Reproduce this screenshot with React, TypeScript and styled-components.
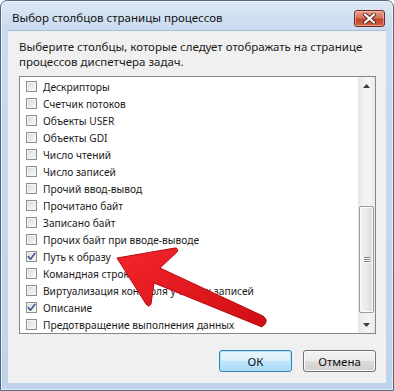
import React from "react";
import styled, { createGlobalStyle } from "styled-components";

const Global = createGlobalStyle`
  html, body { margin: 0; padding: 0; background: #ffffff; }
  body {
    width: 394px;
    height: 391px;
    overflow: hidden;
    font-family: "Noto Sans", "Open Sans", "DejaVu Sans", sans-serif;
    font-size: 11.5px;
    color: #1a1a1a;
  }
`;

const Window = styled.div`
  position: relative;
  box-sizing: border-box;
  width: 394px;
  height: 391px;
  border: 1px solid #56687d;
  border-radius: 7px 7px 0 0;
  background: linear-gradient(180deg, #dbe7f4 0px, #c9dbef 30px, #bfd4ec 100%);
  box-shadow: inset 0 0 0 1px rgba(255, 255, 255, 0.55);
  display: flex;
  flex-direction: column;
  padding: 0 7px 7px 7px;
`;

const TitleBar = styled.div`
  height: 29px;
  display: flex;
  align-items: center;
  justify-content: space-between;
  padding: 0 1px 0 4px;
`;

const Title = styled.div`
  font-size: 11.5px;
  color: #111;
  padding-top: 3px;
`;

const CloseButton = styled.div`
  box-sizing: border-box;
  width: 31px;
  height: 17px;
  margin-top: 5px;
  border: 1px solid #6e2a22;
  border-radius: 3px;
  background: linear-gradient(180deg, #e8a08c 0%, #d5735c 45%, #c2442c 55%, #cf6245 100%);
  box-shadow: inset 0 0 0 1px rgba(255, 210, 200, 0.5);
  display: flex;
  align-items: center;
  justify-content: center;
`;

const Client = styled.div`
  flex: 1;
  background: #f0f0f0;
  border-top: 1px solid #a8bdd6;
  display: flex;
  flex-direction: column;
  padding: 8px 10px 0 11px;
`;

const Description = styled.div`
  line-height: 15px;
  color: #1a1a1a;
`;

const ListBox = styled.div`
  margin-top: 7px;
  height: 258px;
  box-sizing: border-box;
  border: 1px solid #828790;
  background: #ffffff;
  display: flex;
`;

const Items = styled.div`
  flex: 1;
  padding-top: 1px;
  display: flex;
  flex-direction: column;
  font-size: 10.2px;
`;

const Row = styled.div`
  height: 17px;
  display: flex;
  align-items: center;
  padding-left: 6px;
  gap: 6px;
  white-space: nowrap;
`;

const Box = styled.div`
  box-sizing: border-box;
  width: 11px;
  height: 11px;
  flex: none;
  border: 1px solid #8e8f8f;
  background: linear-gradient(135deg, #d7d7d7 0%, #ececec 55%, #fbfbfb 100%);
  box-shadow: inset 0 0 0 1px #f4f4f4;
  display: flex;
  align-items: center;
  justify-content: center;
`;

const Scrollbar = styled.div`
  width: 17px;
  flex: none;
  display: flex;
  flex-direction: column;
  background: linear-gradient(90deg, #e6e6e6 0%, #f1f1f1 30%, #f4f4f4 70%, #eaeaea 100%);
`;

const ArrowButton = styled.div`
  height: 17px;
  flex: none;
  display: flex;
  align-items: center;
  justify-content: center;
`;

const Track = styled.div`
  flex: 1;
  display: flex;
  flex-direction: column;
`;

const Thumb = styled.div`
  box-sizing: border-box;
  margin: 0 1px;
  border: 1px solid #9b9b9b;
  border-radius: 2px;
  background: linear-gradient(90deg, #f2f2f2 0%, #eaeaea 50%, #dadada 100%);
  box-shadow: inset 0 0 0 1px #fbfbfb;
  display: flex;
  flex-direction: column;
  align-items: center;
  justify-content: center;
  gap: 1px;
`;

const Grip = styled.div`
  width: 6px;
  height: 1px;
  background: #7f7f7f;
  box-shadow: 0 1px 0 #fdfdfd;
`;

const Buttons = styled.div`
  margin-top: 16px;
  display: flex;
  justify-content: flex-end;
  gap: 11px;
`;

const Button = styled.div<{ $default?: boolean }>`
  box-sizing: border-box;
  width: 73px;
  height: 22px;
  border-radius: 3px;
  border: 1px solid ${(p) => (p.$default ? "#3c7fb1" : "#707070")};
  background: ${(p) =>
    p.$default
      ? "linear-gradient(180deg, #eaf6fd 0%, #d9f0fc 50%, #bee6fd 51%, #a7d9f5 100%)"
      : "linear-gradient(180deg, #f2f2f2 0%, #ebebeb 50%, #dddddd 51%, #cfcfcf 100%)"};
  box-shadow: inset 0 0 0 1px ${(p) => (p.$default ? "#ace3ff" : "#fbfbfb")};
  display: flex;
  align-items: center;
  justify-content: center;
  color: #111;
`;

const Overlay = styled.svg`
  position: absolute;
  left: -1px;
  top: -1px;
  width: 394px;
  height: 391px;
  pointer-events: none;
`;

const items: [string, boolean][] = [
  ["Дескрипторы", false],
  ["Счетчик потоков", false],
  ["Объекты USER", false],
  ["Объекты GDI", false],
  ["Число чтений", false],
  ["Число записей", false],
  ["Прочий ввод-вывод", false],
  ["Прочитано байт", false],
  ["Записано байт", false],
  ["Прочих байт при вводе-выводе", false],
  ["Путь к образу", true],
  ["Командная строка", false],
  ["Виртуализация контроля учетных записей", false],
  ["Описание", true],
  ["Предотвращение выполнения данных", false],
];

const Check = () => (
  <svg width="9" height="9" viewBox="0 0 9 9">
    <path d="M1.2 4.6 L3.4 7.2 L7.8 1.4" fill="none" stroke="#41558c" strokeWidth="1.6" strokeLinecap="round" strokeLinejoin="round" />
  </svg>
);

const Tri = ({ up }: { up?: boolean }) => (
  <svg width="7" height="4" viewBox="0 0 7 4">
    <path d={up ? "M0 4 L3.5 0 L7 4 Z" : "M0 0 L3.5 4 L7 0 Z"} fill="#3c3c3c" />
  </svg>
);

export default function App() {
  const thumbTop = 112;
  const thumbHeight = 107;
  return (
    <>
      <Global />
      <Window>
        <TitleBar>
          <Title>Выбор столбцов страницы процессов</Title>
          <CloseButton>
            <svg width="13" height="11" viewBox="0 0 13 11">
              <path d="M2 1.5 L11 9.5 M11 1.5 L2 9.5" stroke="#5a2a24" strokeWidth="4" strokeLinecap="round" />
              <path d="M2 1.5 L11 9.5 M11 1.5 L2 9.5" stroke="#ffffff" strokeWidth="2.2" strokeLinecap="round" />
            </svg>
          </CloseButton>
        </TitleBar>
        <Client>
          <Description>
            Выберите столбцы, которые следует отображать на странице
            <br />
            процессов диспетчера задач.
          </Description>
          <ListBox>
            <Items>
              {items.map(([label, checked]) => (
                <Row key={label}>
                  <Box>{checked && <Check />}</Box>
                  <span>{label}</span>
                </Row>
              ))}
            </Items>
            <Scrollbar>
              <ArrowButton>
                <Tri up />
              </ArrowButton>
              <Track>
                <div style={{ height: thumbTop }} />
                <Thumb style={{ height: thumbHeight }}>
                  <Grip />
                  <Grip />
                  <Grip />
                </Thumb>
              </Track>
              <ArrowButton>
                <Tri />
              </ArrowButton>
            </Scrollbar>
          </ListBox>
          <Buttons>
            <Button $default>ОК</Button>
            <Button>Отмена</Button>
          </Buttons>
        </Client>
        <Overlay viewBox="0 0 394 391">
          <defs>
            <linearGradient id="redg" x1="0" y1="0" x2="1" y2="1">
              <stop offset="0" stopColor="#f3262b" />
              <stop offset="1" stopColor="#d00d13" />
            </linearGradient>
          </defs>
          <path
            d="M117 258 L175 248 Q179 248 177 252 L160 268 L263 316 Q270 321 262 327 L154 283 L151 304 Q149 308 146 304 Z"
            fill="url(#redg)"
            stroke="#b60a10"
            strokeWidth="1"
            strokeLinejoin="round"
          />
        </Overlay>
      </Window>
    </>
  );
}
